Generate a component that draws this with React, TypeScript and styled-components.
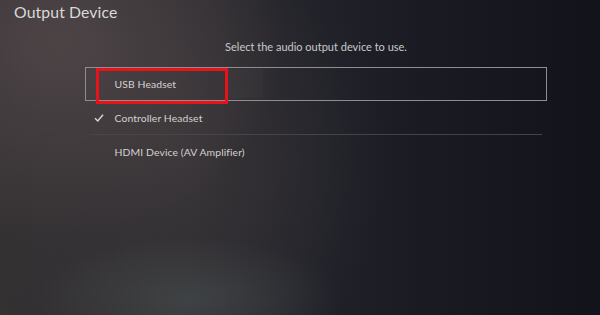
import React from 'react'
import styled, { createGlobalStyle } from 'styled-components'

const GlobalStyle = createGlobalStyle`
  html, body {
    margin: 0;
    padding: 0;
    width: 600px;
    height: 315px;
    overflow: hidden;
    background: #1a1b22;
  }
`

const Screen = styled.div`
  width: 600px;
  height: 315px;
  box-sizing: border-box;
  padding: 1px 0 0 14px;
  font-family: Lato, 'Open Sans', sans-serif;
  color: #d6d6d6;
  background:
    radial-gradient(ellipse 220px 90px at 190px 300px, rgba(80, 90, 90, 0.45), transparent 70%),
    radial-gradient(ellipse 300px 260px at 60px 40px, rgba(88, 76, 78, 0.7), transparent 75%),
    radial-gradient(ellipse 260px 300px at 180px 160px, rgba(66, 60, 62, 0.6), transparent 80%),
    linear-gradient(90deg, #343133 0%, #2c2b2f 30%, #1f2028 55%, #171820 78%, #12131b 100%);
`

const Title = styled.h1`
  margin: 0;
  font-size: 15.8px;
  font-weight: 400;
  line-height: 22px;
  color: #d9d9d9;
  letter-spacing: 0.1px;
`

const Panel = styled.div`
  width: 462px;
  margin: 17px 0 0 71px;
  display: flex;
  flex-direction: column;
`

const Prompt = styled.div`
  text-align: center;
  font-size: 11px;
  line-height: 14px;
  color: #c9c9c9;
  margin-bottom: 13px;
`

const List = styled.div`
  display: flex;
  flex-direction: column;
`

const Row = styled.div<{ $focused?: boolean; $divider?: boolean }>`
  position: relative;
  height: 34px;
  box-sizing: border-box;
  display: flex;
  align-items: center;
  font-size: 10.4px;
  color: #d2d2d2;
  border: ${(p) => (p.$focused ? '1.5px solid #8e8d92' : 'none')};
  border-bottom: ${(p) =>
    p.$focused ? '1.5px solid #8e8d92' : p.$divider ? '1px solid rgba(70, 72, 80, 0.9)' : 'none'};
  margin: ${(p) => (p.$focused ? '0' : '0 5px')};
  padding-left: ${(p) => (p.$focused ? '28.5px' : '24.5px')};
`

const Check = styled.span`
  position: absolute;
  left: 4px;
  top: 50%;
  margin-top: -5px;
  width: 10px;
  height: 10px;
  display: flex;
`

const Label = styled.span`
  letter-spacing: 0.1px;
`

const Highlight = styled.div`
  position: absolute;
  left: 9.5px;
  top: -0.5px;
  width: 132px;
  height: 36px;
  box-sizing: border-box;
  border: 3px solid #e8121a;
`

const Ghost = styled.div`
  position: absolute;
  left: 141.5px;
  top: 1px;
  width: 35px;
  height: 29px;
  background: rgba(255, 255, 255, 0.025);
`

export default function App() {
  return (
    <>
      <GlobalStyle />
      <Screen>
        <Title>Output Device</Title>
        <Panel>
          <Prompt>Select the audio output device to use.</Prompt>
          <List>
            <Row $focused>
              <Label>USB Headset</Label>
              <Ghost />
              <Highlight />
            </Row>
            <Row $divider>
              <Check>
                <svg width="10" height="10" viewBox="0 0 10 10">
                  <path d="M1 5.2 L3.8 8 L9 1.8" fill="none" stroke="#d8d8d8" strokeWidth="1.4" />
                </svg>
              </Check>
              <Label>Controller Headset</Label>
            </Row>
            <Row>
              <Label>HDMI Device (AV Amplifier)</Label>
            </Row>
          </List>
        </Panel>
      </Screen>
    </>
  )
}
